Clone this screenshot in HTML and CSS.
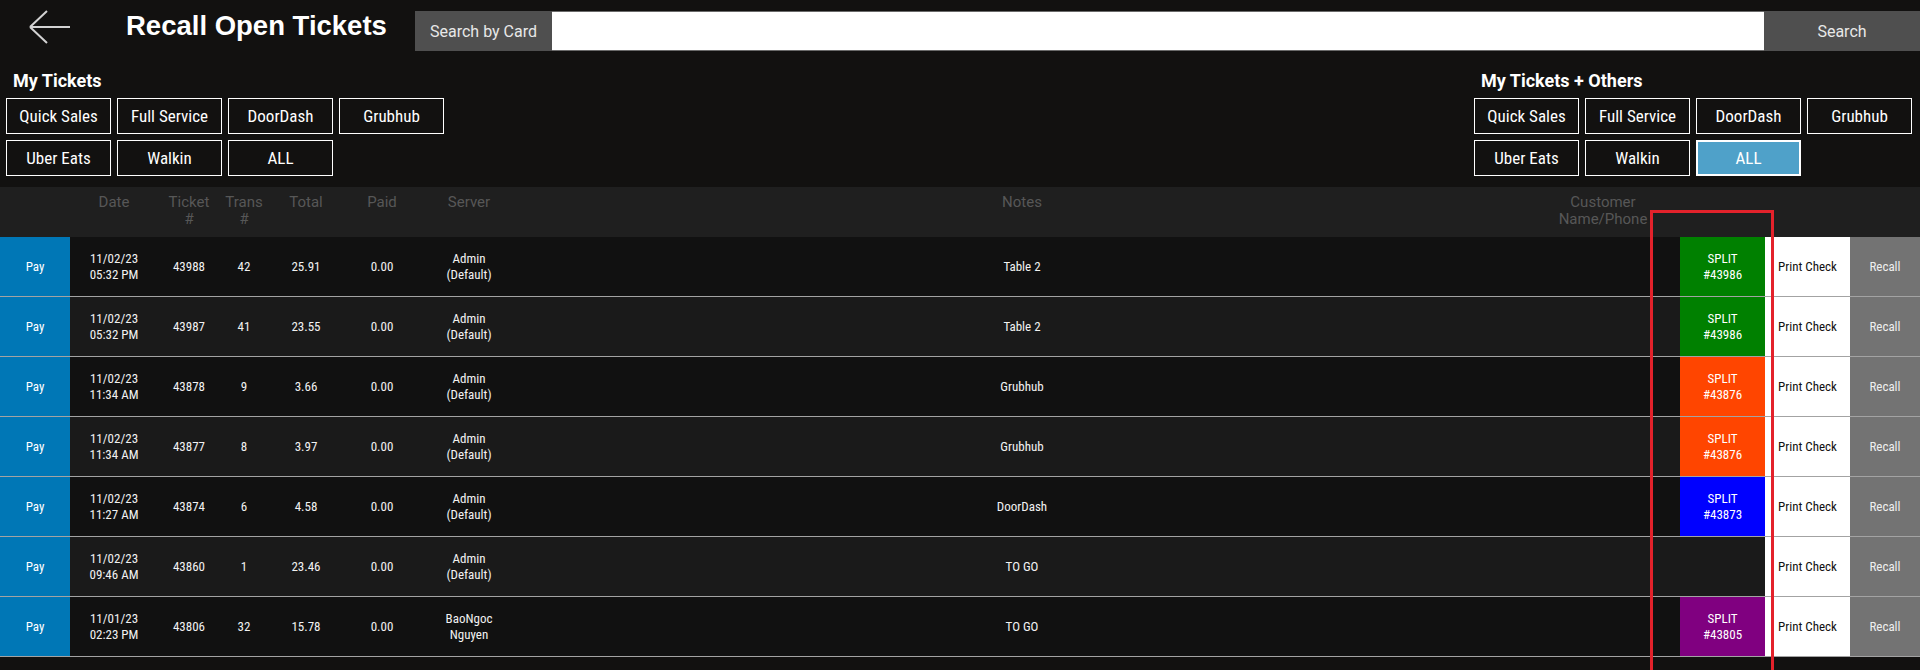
FILE: index.html
```html
<!DOCTYPE html>
<html lang="en">
<head>
  <meta charset="UTF-8">
  <title>Recall Open Tickets</title>
  <link rel="stylesheet" href="styles.css">
</head>
<body>
  <div class="topbar">
    <button class="back-btn" aria-label="Back">
      <svg width="42" height="34" viewBox="0 0 42 34">
        <path d="M1 17 H41 M1 17 L18 1 M1 17 L18 33" fill="none" stroke="#d2d2d2" stroke-width="2"/>
      </svg>
    </button>
    <h1 class="title">Recall Open Tickets</h1>
    <div class="search">
      <span class="search-label">Search by Card</span>
      <input class="search-input" type="text">
      <button class="search-btn">Search</button>
    </div>
  </div>

  <div class="filters">
    <div class="filter-group">
      <div class="filter-title">My Tickets</div>
      <div class="filter-grid">
        <button>Quick Sales</button>
        <button>Full Service</button>
        <button>DoorDash</button>
        <button>Grubhub</button>
        <button>Uber Eats</button>
        <button>Walkin</button>
        <button>ALL</button>
      </div>
    </div>
    <div class="filter-group">
      <div class="filter-title">My Tickets + Others</div>
      <div class="filter-grid">
        <button>Quick Sales</button>
        <button>Full Service</button>
        <button>DoorDash</button>
        <button>Grubhub</button>
        <button>Uber Eats</button>
        <button>Walkin</button>
        <button class="active">ALL</button>
      </div>
    </div>
  </div>

  <table class="tickets">
    <colgroup>
      <col style="width:70px"><col style="width:88px"><col style="width:62px"><col style="width:48px">
      <col style="width:76px"><col style="width:76px"><col style="width:98px"><col style="width:1008px">
      <col style="width:154px"><col style="width:85px"><col style="width:85px"><col style="width:70px">
    </colgroup>
    <thead>
      <tr>
        <th></th>
        <th>Date</th>
        <th>Ticket<br>#</th>
        <th>Trans<br>#</th>
        <th>Total</th>
        <th>Paid</th>
        <th>Server</th>
        <th>Notes</th>
        <th>Customer<br>Name/Phone</th>
        <th></th>
        <th></th>
        <th></th>
      </tr>
    </thead>
    <tbody>
      <tr>
        <td class="pay">Pay</td>
        <td>11/02/23<br>05:32 PM</td>
        <td>43988</td>
        <td>42</td>
        <td>25.91</td>
        <td>0.00</td>
        <td>Admin<br>(Default)</td>
        <td>Table 2</td>
        <td></td>
        <td class="split green">SPLIT<br>#43986</td>
        <td class="print">Print Check</td>
        <td class="recall">Recall</td>
      </tr>
      <tr>
        <td class="pay">Pay</td>
        <td>11/02/23<br>05:32 PM</td>
        <td>43987</td>
        <td>41</td>
        <td>23.55</td>
        <td>0.00</td>
        <td>Admin<br>(Default)</td>
        <td>Table 2</td>
        <td></td>
        <td class="split green">SPLIT<br>#43986</td>
        <td class="print">Print Check</td>
        <td class="recall">Recall</td>
      </tr>
      <tr>
        <td class="pay">Pay</td>
        <td>11/02/23<br>11:34 AM</td>
        <td>43878</td>
        <td>9</td>
        <td>3.66</td>
        <td>0.00</td>
        <td>Admin<br>(Default)</td>
        <td>Grubhub</td>
        <td></td>
        <td class="split orange">SPLIT<br>#43876</td>
        <td class="print">Print Check</td>
        <td class="recall">Recall</td>
      </tr>
      <tr>
        <td class="pay">Pay</td>
        <td>11/02/23<br>11:34 AM</td>
        <td>43877</td>
        <td>8</td>
        <td>3.97</td>
        <td>0.00</td>
        <td>Admin<br>(Default)</td>
        <td>Grubhub</td>
        <td></td>
        <td class="split orange">SPLIT<br>#43876</td>
        <td class="print">Print Check</td>
        <td class="recall">Recall</td>
      </tr>
      <tr>
        <td class="pay">Pay</td>
        <td>11/02/23<br>11:27 AM</td>
        <td>43874</td>
        <td>6</td>
        <td>4.58</td>
        <td>0.00</td>
        <td>Admin<br>(Default)</td>
        <td>DoorDash</td>
        <td></td>
        <td class="split blue">SPLIT<br>#43873</td>
        <td class="print">Print Check</td>
        <td class="recall">Recall</td>
      </tr>
      <tr>
        <td class="pay">Pay</td>
        <td>11/02/23<br>09:46 AM</td>
        <td>43860</td>
        <td>1</td>
        <td>23.46</td>
        <td>0.00</td>
        <td>Admin<br>(Default)</td>
        <td>TO GO</td>
        <td></td>
        <td></td>
        <td class="print">Print Check</td>
        <td class="recall">Recall</td>
      </tr>
      <tr>
        <td class="pay">Pay</td>
        <td>11/01/23<br>02:23 PM</td>
        <td>43806</td>
        <td>32</td>
        <td>15.78</td>
        <td>0.00</td>
        <td>BaoNgoc<br>Nguyen</td>
        <td>TO GO</td>
        <td></td>
        <td class="split purple">SPLIT<br>#43805</td>
        <td class="print">Print Check</td>
        <td class="recall">Recall</td>
      </tr>
    </tbody>
  </table>

  <div class="highlight"></div>
</body>
</html>
```

FILE: styles.css
```css
html, body {
  height: 100%;
  overflow: hidden;
}

body {
  margin: 0;
  position: relative;
  background-color: #121110;
  color: #fff;
  font-family: Roboto, 'Noto Sans', sans-serif;
}

button {
  font-family: inherit;
  cursor: pointer;
}

/* top bar */
.topbar {
  display: flex;
  align-items: flex-start;
  padding-top: 10px;
  height: 41px;
}

.back-btn {
  background: none;
  border: none;
  padding: 0;
  margin-left: 29px;
  width: 42px;
  height: 34px;
}

.back-btn svg {
  display: block;
}

.title {
  margin: 1px 0 0 55px;
  width: 289px;
  font-family: 'Liberation Sans', Arial, sans-serif;
  font-size: 27.5px;
  line-height: 30px;
  font-weight: bold;
  white-space: nowrap;
}

.search {
  flex: 1;
  display: flex;
  height: 40px;
  margin-top: 1px;
}

.search-label {
  width: 137px;
  background-color: #4f4f4f;
  color: #e8e8e8;
  font-size: 16px;
  display: flex;
  align-items: center;
  justify-content: center;
}

.search-input {
  flex: 1;
  margin: 0;
  border: none;
  border-top: 1px solid #6a6a6a;
  border-bottom: 1px solid #6a6a6a;
  background-color: #fff;
  outline: none;
}

.search-btn {
  width: 156px;
  border: none;
  background-color: #4f4f4f;
  color: #e8e8e8;
  font-size: 16px;
}

/* filter buttons */
.filters {
  display: flex;
  justify-content: space-between;
  padding: 19px 8px 11px 6px;
}

.filter-title {
  font-size: 18px;
  font-weight: bold;
  line-height: 22px;
  padding-left: 7px;
  margin-bottom: 6px;
}

.filter-grid {
  display: grid;
  grid-template-columns: repeat(4, 105px);
  grid-auto-rows: 36px;
  gap: 6px;
}

.filter-grid button {
  background-color: transparent;
  color: #fff;
  border: 1px solid #fff;
  font-size: 17px;
  font-stretch: 85%;
  padding: 0;
}

.filter-grid button.active {
  background-color: #4fa1c9;
  border-width: 2px;
}

/* tickets table */
.tickets {
  width: 1920px;
  border-collapse: collapse;
  table-layout: fixed;
}

.tickets th {
  height: 50px;
  padding: 7px 0 0;
  box-sizing: border-box;
  vertical-align: top;
  background-color: #1f1f1f;
  color: #575757;
  font-weight: normal;
  font-size: 15px;
  line-height: 17px;
}

.tickets td {
  height: 59px;
  padding: 0;
  text-align: center;
  vertical-align: middle;
  border-bottom: 1px solid #a3a3a3;
  font-size: 13px;
  font-stretch: 85%;
  line-height: 16px;
  color: #f2f2f2;
}

.tickets tbody tr:nth-child(odd) {
  background-color: #111111;
}

.tickets tbody tr:nth-child(even) {
  background-color: #1a1a1a;
}

.tickets td.pay {
  background-color: #0077b6;
  color: #fff;
}

.tickets td.split {
  color: #fff;
}

.split.green { background-color: #008000; }
.split.orange { background-color: #ff4500; }
.split.blue { background-color: #0000ff; }
.split.purple { background-color: #800080; }

.tickets td.print {
  background-color: #fff;
  color: #111;
}

.tickets td.recall {
  background-color: #737373;
  color: #eee;
}

/* red annotation box, runs off the bottom edge */
.highlight {
  position: absolute;
  left: 1650px;
  top: 210px;
  width: 118px;
  height: 457px;
  border: 3px solid #e3222b;
  border-bottom: none;
  pointer-events: none;
}
```
